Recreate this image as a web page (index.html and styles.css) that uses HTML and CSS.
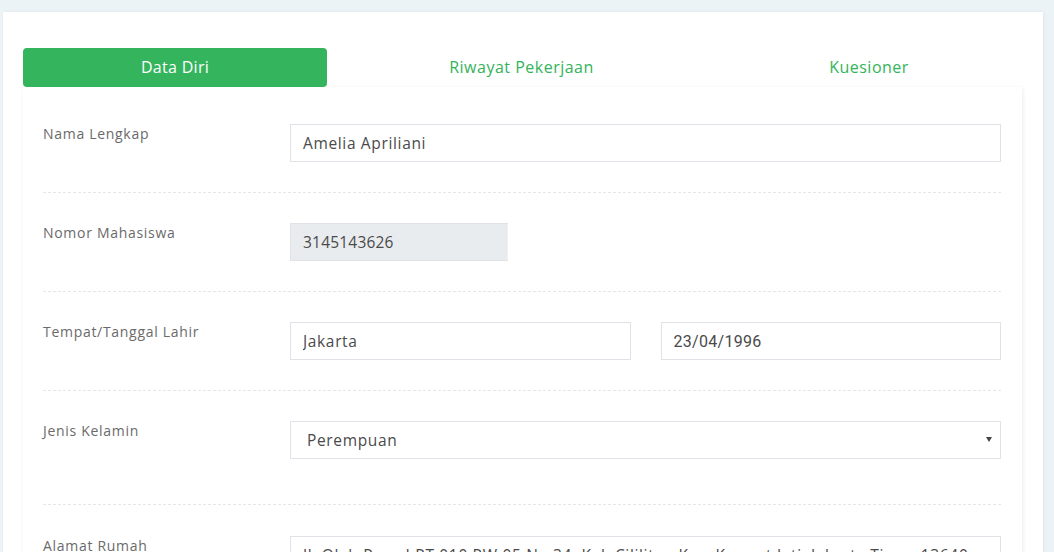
FILE: index.html
```html
<!DOCTYPE html>
<html>
<head>
<meta charset="utf-8">
<link rel="stylesheet" href="styles.css">
</head>
<body>
<div class="page">
  <div class="card">
    <div class="tabs">
      <div class="tab tab-active">Data Diri</div>
      <div class="tab tab-mid">Riwayat Pekerjaan</div>
      <div class="tab tab-last">Kuesioner</div>
    </div>
    <div class="panel">
      <div class="row row-first">
        <div class="label">Nama Lengkap</div>
        <div class="fields"><input class="field" type="text" value="Amelia Apriliani"></div>
      </div>
      <div class="row">
        <div class="label">Nomor Mahasiswa</div>
        <div class="fields"><input class="field field-disabled" type="text" value="3145143626" disabled></div>
      </div>
      <div class="row">
        <div class="label">Tempat/Tanggal Lahir</div>
        <div class="fields fields-two">
          <input class="field" type="text" value="Jakarta">
          <input class="field field-date" type="text" value="23/04/1996">
        </div>
      </div>
      <div class="row row-select">
        <div class="label">Jenis Kelamin</div>
        <div class="fields">
          <div class="select-wrap">
            <select class="field field-select">
              <option>Perempuan</option>
              <option>Laki-laki</option>
            </select>
          </div>
        </div>
      </div>
      <div class="row row-last">
        <div class="label">Alamat Rumah</div>
        <div class="fields"><input class="field" type="text" value="Jl. Olah Raga I RT 010 RW 05 No 34, Kel. Cililitan Kec. Kramat Jati, Jakarta Timur 13640"></div>
      </div>
    </div>
  </div>
</div>
</body>
</html>
```
FILE: styles.css
```css
html, body {
  margin: 0;
  padding: 0;
  height: 100%;
  overflow: hidden;
}
body {
  background: #ebf3f7;
  font-family: "Open Sans", "Noto Sans", sans-serif;
}
.page {
  padding: 12px 11px 0 3px;
}
.card {
  background: #ffffff;
  padding: 36px 20px 0 20px;
  box-shadow: 1px 0 3px rgba(0, 0, 0, 0.06);
  height: 600px;
}
.tabs {
  display: flex;
  height: 39px;
}
.tab {
  display: flex;
  align-items: center;
  justify-content: center;
  font-size: 16px;
  color: #34b35a;
  letter-spacing: 0.5px;
  padding-bottom: 1px;
}
.tab-active {
  width: 304px;
  background: #34b45c;
  color: #ffffff;
  border-radius: 4px;
  letter-spacing: 0.3px;
}
.tab-mid {
  width: 389px;
}
.tab-last {
  width: 306px;
}
.panel {
  width: 999px;
  background: #ffffff;
  box-shadow: 1px 1px 4px rgba(0, 0, 0, 0.08);
  padding: 7px 0 0 0;
  min-height: 500px;
}
.row {
  margin: 0 21px 0 20px;
  padding: 30px 0 30px 0;
  border-bottom: 1px dashed #e6e6e6;
  display: grid;
  grid-template-columns: 247px 1fr;
}
.row-select {
  padding-bottom: 45px;
}
.row-last {
  border-bottom: none;
  padding-top: 31px;
}
.label {
  font-size: 14px;
  line-height: 18px;
  padding-top: 1px;
  color: #6a6a6a;
  letter-spacing: 0.7px;
}
.fields {
  display: flex;
}
.fields-two {
  display: grid;
  grid-template-columns: 1fr 1fr;
  gap: 30px;
}
.field {
  box-sizing: border-box;
  width: 100%;
  height: 38px;
  border: 1px solid #dfe2e6;
  border-radius: 0;
  padding: 0 12px;
  font-family: "Open Sans", "Noto Sans", sans-serif;
  font-size: 15.5px;
  color: #4a4a4a;
  background: #ffffff;
  outline: none;
  letter-spacing: 0.65px;
}
.field-disabled {
  width: 218px;
  background: #e9ecef;
  border-right-color: #eef0f2;
  color: #4a4a4a;
  letter-spacing: 0.2px;
}
.field-date {
  font-family: Roboto, "Liberation Sans", sans-serif;
  font-size: 16px;
  letter-spacing: 0.3px;
}
.select-wrap {
  position: relative;
  width: 100%;
}
.field-select {
  appearance: none;
  -webkit-appearance: none;
  padding: 0 16px;
}
.select-wrap::after {
  content: "";
  position: absolute;
  right: 9px;
  top: 16px;
  border-left: 3px solid transparent;
  border-right: 3px solid transparent;
  border-top: 5px solid #444;
}
```
